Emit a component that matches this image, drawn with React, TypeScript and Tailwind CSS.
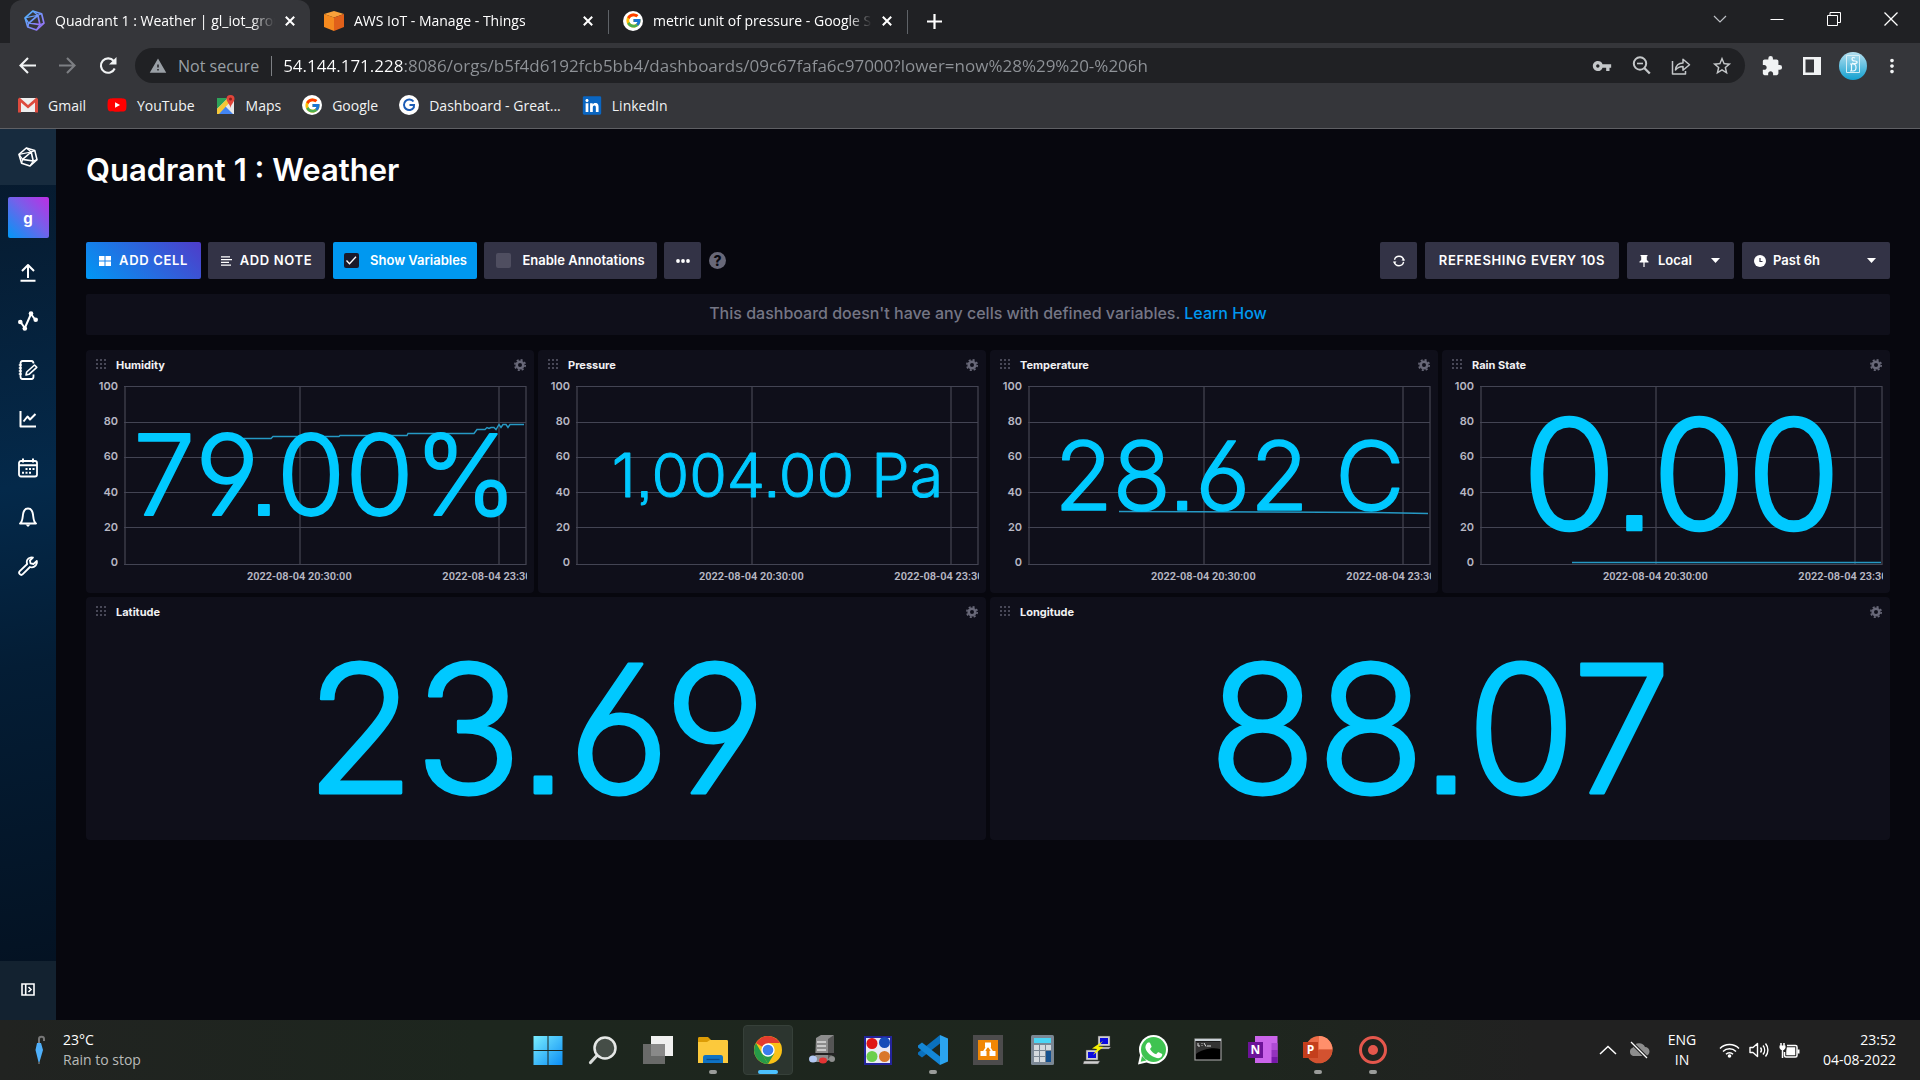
import type { ReactNode } from "react";
import { FcGoogle } from "react-icons/fc";
import { FaLinkedin, FaYoutube } from "react-icons/fa";
import {
  MdExtension,
  MdMoreVert,
  MdStarBorder,
  MdVpnKey,
  MdWarning,
} from "react-icons/md";

function Cubo({ size, color = "currentColor" }: { size: number; color?: string }) {
  return (
    <svg width={size} height={size} viewBox="0 0 20 20" fill="none" stroke={color} strokeWidth="1.6" strokeLinejoin="round">
      <defs>
        <linearGradient id="cubo" x1="0" y1="0" x2="1" y2="1">
          <stop offset="0" stopColor="#4bb8ff" />
          <stop offset="1" stopColor="#a06bf5" />
        </linearGradient>
      </defs>
      <path d="M8.3 1 16.8 3.6 19 12.6 12 19 3.6 16.2 1 7.4Z" />
      <path d="M13.2 5 4.6 12.4 15.2 14Z" />
      <path d="M8.3 1 13.2 5 16.8 3.6M1 7.4 13.2 5M4.6 12.4 3.6 16.2M4.6 12.4 1 7.4M15.2 14 12 19M15.2 14 19 12.6" strokeWidth="1.2" />
    </svg>
  );
}

function CloseX() {
  return (
    <svg width="10" height="10" viewBox="0 0 10 10" stroke="currentColor" strokeWidth="2">
      <path d="M.8.8 9.2 9.2M9.2.8.8 9.2" />
    </svg>
  );
}

function GoogleDisc() {
  return (
    <span className="flex size-5 shrink-0 items-center justify-center rounded-full bg-white">
      <FcGoogle size={17} />
    </span>
  );
}

function AwsCube() {
  return (
    <svg width="20" height="20" viewBox="0 0 20 20" className="shrink-0">
      <path d="M10 0 20 3 10 6.500 0 3Z" fill="#f9a13a" />
      <path d="M0 3 10 6.500V20L0 16Z" fill="#f58a1f" />
      <path d="M20 3 10 6.500V20l10-4Z" fill="#e0601a" />
    </svg>
  );
}

function Tab({ icon, title, active = false }: { icon: ReactNode; title: string; active?: boolean }) {
  return (
    <div
      className={
        active
          ? "flex h-full w-[300px] items-center gap-2.5 rounded-t-xl bg-[#35363a] pr-[15px] pb-0.5 pl-[14px]"
          : "flex h-full w-[298px] items-center gap-2.5 pr-[15px] pb-0.5 pl-[14px]"
      }
    >
      {icon}
      <span className="min-w-0 flex-1 overflow-hidden whitespace-nowrap [mask-image:linear-gradient(90deg,#000_calc(100%-24px),transparent)]">{title}</span>
      <button aria-label={"Close " + title} className="shrink-0">
        <CloseX />
      </button>
    </div>
  );
}

function BrowserChrome() {
  return (
    <header className="border-b border-[#5f6064] bg-[#35363a] font-['Open_Sans',sans-serif] text-[14px] text-white">
      <div className="flex h-[43px] items-center bg-[#202124] pl-[10px]">
        <Tab active icon={<Cubo size={21} color="url(#cubo)" />} title="Quadrant 1 : Weather | gl_iot_group" />
        <Tab icon={<AwsCube />} title="AWS IoT - Manage - Things" />
        <span className="h-6 w-px bg-[#5f6368]" />
        <Tab icon={<GoogleDisc />} title="metric unit of pressure - Google Search" />
        <span className="h-6 w-px bg-[#5f6368]" />
        <button aria-label="New tab" className="ml-[19px]">
          <svg width="15" height="15" viewBox="0 0 15 15" stroke="currentColor" strokeWidth="2.200">
            <path d="M7.500 0v15M0 7.500h15" />
          </svg>
        </button>
        <div className="mr-[22px] mb-1.5 ml-auto flex items-center gap-[43px]">
          <button aria-label="Search tabs">
            <svg width="14" height="14" viewBox="0 0 14 14" fill="none" stroke="#bdc1c6" strokeWidth="1.200">
              <path d="m1 4 6 6 6-6" />
            </svg>
          </button>
          <button aria-label="Minimize">
            <svg width="14" height="14" viewBox="0 0 14 14" stroke="currentColor"><path d="M.5 7.500h13" /></svg>
          </button>
          <button aria-label="Restore">
            <svg width="14" height="14" viewBox="0 0 14 14" fill="none" stroke="currentColor"><path d="M.5 3.500h10V13.500H.5ZM3 3.500V.5h10.500v10H11" /></svg>
          </button>
          <button aria-label="Close window">
            <svg width="14" height="14" viewBox="0 0 14 14" stroke="currentColor" strokeWidth="1.300"><path d="m.5.5 13 13M13.500.5l-13 13" /></svg>
          </button>
        </div>
      </div>

      <div className="flex h-[45px] items-center pl-[19px]">
        <div className="flex w-[116px] items-center gap-[23px]">
          <button aria-label="Back">
            <svg width="17" height="17" viewBox="0 0 17 17" fill="none" stroke="#f1f3f4" strokeWidth="2.100"><path d="M17 8.500H1.500M9 1 1.500 8.500 9 16" /></svg>
          </button>
          <button aria-label="Forward">
            <svg width="17" height="17" viewBox="0 0 17 17" fill="none" stroke="#7d7f83" strokeWidth="2.100"><path d="M0 8.500h15.500M8 1l7.500 7.500L8 16" /></svg>
          </button>
          <button aria-label="Reload">
            <svg width="18" height="18" viewBox="0 0 18 18" fill="none" stroke="#f1f3f4" strokeWidth="2.100"><path d="M15.700 11.500a7.200 7.200 0 1 1-1-7.500L16 5.500" /><path d="M17.500 0v7.500H10Z" fill="#f1f3f4" stroke="none" /></svg>
          </button>
        </div>
        <div className="flex h-[35px] flex-1 items-center rounded-full bg-[#202124] pr-[12px] pl-[14px]">
          <MdWarning size={18} color="#9aa0a6" />
          <span className="ml-[11px] text-[16px] text-[#9aa0a6]">Not secure</span>
          <span className="mr-[11px] ml-[12px] h-5 w-px bg-[#7d8084]" />
          <input
            aria-label="Address"
            readOnly
            value="54.144.171.228:8086/orgs/b5f4d6192fcb5bb4/dashboards/09c67fafa6c97000?lower=now%28%29%20-%206h"
            className="min-w-0 flex-1 bg-[linear-gradient(90deg,#fff_121px,#8f9398_121px)] bg-clip-text text-[17px] text-transparent outline-none"
          />
          <div className="flex items-center gap-5 text-[#c4c7c9]">
            <button aria-label="Passwords"><MdVpnKey size={20} /></button>
            <button aria-label="Zoom">
              <svg width="19" height="19" viewBox="0 0 19 19" fill="none" stroke="currentColor" strokeWidth="2"><circle cx="8" cy="7.500" r="6.200" /><path d="m12.300 12 5.500 5.500" strokeWidth="2.400" /><path d="M5 7.500h6" strokeWidth="1.600" /></svg>
            </button>
            <button aria-label="Share">
              <svg width="20" height="20" viewBox="0 0 20 20" fill="none" stroke="currentColor" strokeWidth="1.500" strokeLinejoin="round">
                <path d="M1.500 5v13h13v-3M4.500 14c.5-5 3-7 7.500-7V3.200l6.500 5.500-6.500 5.500V10.500c-3.500 0-5.500 1-7.500 3.500Z" />
              </svg>
            </button>
            <button aria-label="Bookmark"><MdStarBorder size={22} /></button>
          </div>
        </div>
        <div className="flex items-center pr-[17px] pl-[16px] text-[#f1f3f4]">
          <button aria-label="Extensions"><MdExtension size={22} /></button>
          <button aria-label="Side panel" className="ml-5">
            <svg width="18" height="18" viewBox="0 0 18 18" fill="none" stroke="currentColor" strokeWidth="2.500"><path d="M1.250 1.250h15.500v15.500H1.250Z" /><path d="M11 1h6v16h-6Z" fill="currentColor" stroke="none" /></svg>
          </button>
          <button aria-label="Profile" className="ml-[18px]">
            <svg width="28" height="28" viewBox="0 0 28 28">
              <defs><linearGradient id="av" x1="0" y1="0" x2="0" y2="1"><stop offset="0" stopColor="#b5e0f0" /><stop offset="1" stopColor="#12a0d0" /></linearGradient></defs>
              <circle cx="14" cy="14" r="14" fill="url(#av)" />
              <path d="M7.500 3.500h13v17h-13Z" fill="none" stroke="#d5eef6" />
              <path d="M16 6c-4-2-4 3 0 3s2 4-3 2M11 12h3c4 0 4 7 0 7h-3m1.500-7v7" fill="none" stroke="#eefaff" strokeWidth="1.200" />
            </svg>
          </button>
          <button aria-label="Menu" className="ml-[14px]"><MdMoreVert size={22} /></button>
        </div>
      </div>

      <nav aria-label="Bookmarks" className="flex h-[40px] items-center gap-[21px] pb-1.5 pl-[18px] text-[#f1f3f4]">
        <Bookmark label="Gmail">
          <svg width="20" height="16" viewBox="0 0 20 16"><path d="M1 1h18v14H1Z" fill="#eee" /><path d="M0 2 1.500.5 10 8 18.500.5 20 2v13.500h-3V5.500l-7 6-7-6v10H0Z" fill="#dd4b3e" /></svg>
        </Bookmark>
        <Bookmark label="YouTube"><span className="relative flex"><span className="absolute inset-x-1.5 inset-y-1.5 bg-white" /><FaYoutube size={20} color="#f00" className="relative" /></span></Bookmark>
        <Bookmark label="Maps">
          <svg width="20" height="20" viewBox="0 0 20 20"><path d="M1 3h17v16H1Z" fill="#e8e8e8" /><path d="M1 3h11L1 14Z" fill="#2ea35a" /><path d="m1 19 8-8 8 8Z" fill="#4285f4" /><path d="M1 14 12 3l3 3L3 19H1Z" fill="#f6c737" /><path d="M14.500 0a4 4 0 0 1 4 4c0 3-3.500 5-4 9-.5-4-4-6-4-9a4 4 0 0 1 4-4Z" fill="#e2453a" /><circle cx="14.500" cy="4" r="1.500" fill="#8a1f17" /></svg>
        </Bookmark>
        <Bookmark label="Google"><GoogleDisc /></Bookmark>
        <Bookmark label="Dashboard - Great...">
          <svg width="20" height="20" viewBox="0 0 20 20"><circle cx="10" cy="10" r="10" fill="#fff" /><path d="M14.500 6.500a5.300 5.300 0 1 0 .3 6l.2-2.500h-4.500" fill="none" stroke="#1a5bb5" strokeWidth="2" /></svg>
        </Bookmark>
        <Bookmark label="LinkedIn"><FaLinkedin size={21} color="#0a66c2" className="bg-[linear-gradient(#fff,#fff)] bg-[length:14px_14px] bg-center bg-no-repeat" /></Bookmark>
      </nav>
    </header>
  );
}

function Bookmark({ label, children }: { label: string; children: ReactNode }) {
  return (
    <a href="#" className="flex items-center gap-2.5 whitespace-nowrap">
      <span className="flex w-5 justify-center">{children}</span>
      {label}
    </a>
  );
}

const navItems: { label: string; icon: ReactNode }[] = [
  { label: "Load Data", icon: <path d="M10 16V3.500M4 9l6-6 6 6M2.500 18.800h15" strokeWidth="2" /> },
  {
    label: "Data Explorer",
    icon: (
      <>
        <path d="m2.500 11 4.300 6L13 3l4.500 6" strokeWidth="2" />
        <g fill="currentColor" stroke="none"><circle cx="2.300" cy="11" r="2.300" /><circle cx="6.800" cy="17.500" r="2.300" /><circle cx="13" cy="2.600" r="2.300" /><circle cx="17.700" cy="8.800" r="2.300" /></g>
      </>
    ),
  },
  {
    label: "Notebooks",
    icon: (
      <>
        <path d="M15.500 3.500c0-1.500-.5-2.500-2-2.500H4.500C3 1 2.500 2 2.500 3.500v13C2.500 18 3 19 4.500 19h9c1.500 0 2-1 2-2.500v-2" strokeWidth="1.800" />
        <path d="m16.500 5 2.300 2.300-7.800 7-3 .7.700-3Z" strokeWidth="1.600" />
        <path d="M.8 5h3M.8 8h3M.8 11h3M.8 14h3" strokeWidth="1.400" />
      </>
    ),
  },
  { label: "Dashboards", icon: <path d="M2.500 2v15.500H18M5.500 12.500l4-5 2.500 3 5.500-5.500" strokeWidth="2" /> },
  {
    label: "Tasks",
    icon: (
      <>
        <rect x="1" y="3" width="18" height="15.500" rx="2" strokeWidth="1.800" />
        <path d="M1 7.300h18M5 .5v4M15 .5v4" strokeWidth="2" />
        <path d="M7.500 11h9M4 14.800h9" strokeWidth="2" strokeDasharray="2 1.500" />
      </>
    ),
  },
  {
    label: "Alerts",
    icon: (
      <>
        <path d="M2 16.500c2.500-1.500 2.500-5 3-9C5.500 4 7 1.500 10 1.500S14.500 4 15 7.500c.5 4 .5 7.500 3 9Z" strokeWidth="1.900" />
        <path d="M7.500 17.500h5L10 20Z" fill="currentColor" stroke="none" />
      </>
    ),
  },
  {
    label: "Settings",
    icon: <path d="M12.500 1.500c-3 .8-4.500 3.500-3.300 6.500L1.800 15.200a2 2 0 0 0 3 3L12 11c3 1 6-.7 6.800-3.700.2-.8.1-1.600 0-2.300l-3.300 3-3-.7-.6-2.800 3-3c-.8-.2-1.600-.2-2.400 0Z" strokeWidth="1.800" />,
  },
];

function Sidebar() {
  return (
    <aside className="flex w-14 shrink-0 flex-col items-center bg-[linear-gradient(170deg,#07182a_0%,#04294a_40%,#041d35_60%,#04101f_100%)] text-white">
      <a href="#" aria-label="Home" className="flex h-14 w-full items-center justify-center bg-[#172b3e]">
        <Cubo size={20} />
      </a>
      <button className="mt-3 flex size-[41px] items-center justify-center rounded-xs bg-[linear-gradient(45deg,#0098f5,#7660ea_55%,#be2ee4)] pt-1 font-['Inter'] text-[15px] font-bold">g</button>
      <nav className="mt-[9px] flex flex-col">
        {navItems.map((n) => (
          <a key={n.label} href="#" aria-label={n.label} className="flex h-[49px] w-14 items-center justify-center">
            <svg width="20" height="20" viewBox="0 0 20 20" fill="none" stroke="currentColor" strokeLinejoin="round" strokeLinecap="butt">{n.icon}</svg>
          </a>
        ))}
      </nav>
      <button aria-label="Expand menu" className="mt-auto flex h-[59px] w-full items-center justify-center bg-[#132230] pb-0.5">
        <svg width="14" height="13" viewBox="0 0 14 13" fill="none" stroke="currentColor" strokeWidth="1.600"><path d="M1 1h12v11H1ZM4.700 1v11M7.500 4l2.500 2.500L7.500 9" /></svg>
      </button>
    </aside>
  );
}

function StatText({ children, size }: { children: string; size: string }) {
  return (
    <svg className="h-full w-full overflow-visible" role="img" aria-label={children}>
      <text
        x="50%"
        y="50%"
        dy="0.358em"
        textAnchor="middle"
        fill="#00c9ff"
        stroke="#00c9ff"
        strokeLinejoin="round"
        className={"font-['Inter',sans-serif] font-light [font-feature-settings:'cv03','cv04','ss07'] [stroke-width:0.016em] " + size}
      >
        {children}
      </text>
    </svg>
  );
}

function Cell({ title, wide = false, children }: { title: string; wide?: boolean; children: ReactNode }) {
  return (
    <section className={"flex h-[243px] flex-col rounded-sm bg-[#0f0f1a] " + (wide ? "col-span-2" : "")}>
      <div className="flex h-[29px] shrink-0 items-center pr-2 pl-[10px]">
        <svg width="10" height="11" viewBox="0 0 10 11" fill="none" stroke="#5c5c6c" strokeWidth="1.500" strokeDasharray="2 2"><path d="M0 1h10M0 5h10M0 9h10" /></svg>
        <h2 className="ml-[10px] flex-1 text-[11px] leading-4 font-bold text-[#f1f1f3]">{title}</h2>
        <button aria-label={"Configure " + title}>
          <svg width="12" height="12" viewBox="0 0 12 12" fill="none" stroke="#686878"><circle cx="6" cy="6" r="3.300" strokeWidth="2.600" /><circle cx="6" cy="6" r="5.200" strokeWidth="1.600" strokeDasharray="2.100 1.984" /></svg>
        </button>
      </div>
      {children}
    </section>
  );
}

function ChartCell({ title, line, stat, size }: { title: string; line?: string; stat: string; size: string }) {
  return (
    <Cell title={title}>
      <div className="flex pr-[7px] text-[11px] leading-[14px] font-semibold text-[#b8b8c4]">
        <div className="flex h-[190px] w-8 shrink-0 flex-col justify-between text-right">
          {[100, 80, 60, 40, 20, 0].map((v) => (
            <span key={v}>{v}</span>
          ))}
        </div>
        <div className="mt-[7px] ml-[6px] min-w-0 flex-1 overflow-hidden">
          <div className="relative h-[179px]">
            <svg className="h-full w-full" viewBox="0 0 403 179" preserveAspectRatio="none" fill="none">
              <g stroke="#2f2f3b" strokeWidth="2"><path d="M1 0v179M176 0v179M375 0v179M402 0v179" /></g>
              <g stroke="#434453"><path d="M0 .5h402M0 36.500h402M0 71.500h402M0 106.500h402M0 141.500h402M0 178.500h402" /></g>
              {line && <path d={line} stroke="#2699c4" strokeWidth="1.400" />}
            </svg>
            <div className="absolute inset-0">
              <StatText size={size}>{stat}</StatText>
            </div>
          </div>
          <div className="mt-[5px] flex overflow-hidden font-['Roboto',sans-serif] whitespace-nowrap">
            <span className="w-[79%] shrink-0 pl-[8%] text-center">2022-08-04 20:30:00</span>
            <span>2022-08-04 23:30:00</span>
          </div>
        </div>
      </div>
    </Cell>
  );
}

function Dashboard() {
  const btn = "flex h-[37px] items-center justify-center rounded-xs bg-[#333346] font-semibold whitespace-nowrap";
  return (
    <main className="min-w-0 flex-1 bg-[#07070e] pr-[30px] pl-[30px] font-['Inter',sans-serif] text-[13px] text-white">
      <h1 className="pt-[21px] text-[31px] leading-10 font-semibold">Quadrant 1 : Weather</h1>
      <div className="mt-[52px] flex items-center justify-between">
        <div className="flex items-center gap-[7px]">
          <button className="flex h-[37px] w-[115px] items-center justify-center gap-2 rounded-xs bg-[linear-gradient(45deg,#0098f5,#4f3cc9)] font-semibold tracking-wider whitespace-nowrap">
            <svg width="12" height="10" viewBox="0 0 12 10" fill="currentColor"><path d="M0 0h5.500v4.500H0ZM6.500 0H12v4.500H6.500ZM0 5.500h5.500V10H0ZM6.500 5.500H12V10H6.500Z" /></svg>
            ADD CELL
          </button>
          <button className={btn + " w-[117px] gap-2 tracking-wider"}>
            <svg width="11" height="10" viewBox="0 0 11 10" stroke="currentColor" strokeWidth="1.300"><path d="M0 .8h9M0 3.600h11M0 6.400h8M0 9.200h10" /></svg>
            ADD NOTE
          </button>
          <label className="ml-px flex h-[37px] w-[144px] items-center gap-[11px] rounded-xs bg-[#0098f0] pl-[11px] font-semibold whitespace-nowrap">
            <span className="relative flex">
              <input type="checkbox" defaultChecked className="size-[15px] appearance-none rounded-xs bg-[#1a1a2a]" />
              <svg className="pointer-events-none absolute inset-0" width="15" height="15" viewBox="0 0 15 15" fill="none" stroke="#fff" strokeWidth="1.300"><path d="m2.500 7.500 3 3.300 6.500-7" /></svg>
            </span>
            Show Variables
          </label>
          <label className={btn + " w-[173px] gap-[11px]"}>
            <input type="checkbox" className="size-[15px] appearance-none rounded-xs bg-[#4f4e60]" />
            Enable Annotations
          </label>
          <button aria-label="More options" className={btn + " w-[37px]"}>
            <svg width="14" height="4" viewBox="0 0 14 4" fill="currentColor"><circle cx="2" cy="2" r="1.900" /><circle cx="7" cy="2" r="1.900" /><circle cx="12" cy="2" r="1.900" /></svg>
          </button>
          <button aria-label="Help" className="ml-px flex size-[17px] items-center justify-center rounded-full bg-[#686878] text-[14px] leading-none font-extrabold text-[#07070e]">?</button>
        </div>
        <div className="flex items-center gap-2">
          <button aria-label="Refresh" className={btn + " w-[37px]"}>
            <svg width="12" height="12" viewBox="0 0 12 12" fill="none" stroke="currentColor" strokeWidth="1.400"><circle cx="6" cy="6" r="4.700" strokeDasharray="12.500 2.260" strokeDashoffset="-1" /><path d="M0 6.500h3.500L1.300 9ZM8.500 5.500H12L10.700 3Z" fill="currentColor" stroke="none" /></svg>
          </button>
          <button className={btn + " w-[194px] tracking-wider"}>REFRESHING EVERY 10S</button>
          <Dropdown label="Time zone" value="Local" width="w-[107px]">
            <svg width="10" height="12" viewBox="0 0 10 12" fill="currentColor"><path d="M1.500 0h7v1.200H7.800V5L9.500 6.500v1H5.600V12H4.400V7.500H.5v-1L2.200 5V1.200h-.7Z" /></svg>
          </Dropdown>
          <Dropdown label="Time range" value="Past 6h" width="w-[148px]">
            <svg width="12" height="12" viewBox="0 0 12 12"><circle cx="6" cy="6" r="6" fill="currentColor" /><path d="M6 3v3.500h2.500" fill="none" stroke="#333346" strokeWidth="1.200" /></svg>
          </Dropdown>
        </div>
      </div>

      <p className="mt-[15px] flex h-[41px] items-center justify-center gap-1 rounded-xs bg-[#0f0f1a] pb-[3px] text-[16px] font-medium text-[#757685]">
        This dashboard doesn't have any cells with defined variables.
        <a href="#" className="text-[#0098f0]">Learn How</a>
      </p>

      <div className="mt-[15px] grid grid-cols-4 gap-1">
        <ChartCell
          title="Humidity"
          stat="79.00%"
          size="text-[111px]"
          line="M93 52.500H147L149 50.500H215L216 49.500H283L284 47.500H350L353 43.500H361L363 41.500 365 42.500 367 41.500H370L372 43.500 375 38.500 377 41.500 379 38.500H382L384 41.500 386 38.500H400"
        />
        <ChartCell title="Pressure" stat="1,004.00 Pa" size="text-[61px]" />
        <ChartCell title="Temperature" stat="28.62 C" size="text-[95px]" line="M91 125.500 240 126 347 126.500 400 127.500" />
        <ChartCell title="Rain State" stat="0.00" size="text-[153px]" line="M92 176.500H401" />
        <Cell title="Latitude" wide>
          <div className="h-[208px]"><StatText size="text-[177px]">23.69</StatText></div>
        </Cell>
        <Cell title="Longitude" wide>
          <div className="h-[208px]"><StatText size="text-[177px]">88.07</StatText></div>
        </Cell>
      </div>
    </main>
  );
}

function Dropdown({ label, value, width, children }: { label: string; value: string; width: string; children: ReactNode }) {
  return (
    <div className={"relative flex h-[37px] items-center rounded-xs bg-[#333346] " + width}>
      <span className="pointer-events-none absolute left-3">{children}</span>
      <select aria-label={label} className="h-full w-full appearance-none pl-[31px] font-semibold outline-none">
        <option>{value}</option>
      </select>
      <svg className="pointer-events-none absolute right-[14px]" width="9" height="5" viewBox="0 0 9 5" fill="currentColor"><path d="M0 0h9L4.500 5Z" /></svg>
    </div>
  );
}

const apps: { name: string; state?: "open" | "active"; icon: ReactNode }[] = [
  {
    name: "Start",
    icon: (
      <>
        <defs><linearGradient id="win" gradientUnits="userSpaceOnUse" x1="0" y1="0" x2="30" y2="30"><stop offset="0" stopColor="#7cf0ff" /><stop offset="1" stopColor="#0a8cf5" /></linearGradient></defs>
        <path d="M.5 1H14.500V15H.5ZM15.500 1h14v14h-14ZM.5 16H14.500V30H.5ZM15.500 16h14v14h-14Z" fill="url(#win)" />
      </>
    ),
  },
  {
    name: "Search",
    icon: (<><path d="m8.500 21-6 6.500" stroke="#d8dbd9" strokeWidth="3.200" strokeLinecap="round" /><circle cx="17" cy="13" r="10.500" fill="#454d47" stroke="#e6e8e7" strokeWidth="2.500" /></>),
  },
  { name: "Task View", icon: <><path d="M8 1h22v20H8Z" fill="#f0f0f0" /><path d="M0 9h22v20H0Z" fill="#777" fillOpacity=".85" /></> },
  {
    name: "File Explorer",
    state: "open",
    icon: (<><path d="M0 3.500C0 2.500.5 2 1.500 2H10l3 3v5H0Z" fill="#dc9c06" /><path d="M0 7h9l3-2h16.500c1 0 1.500.5 1.500 1.500V28H0Z" fill="#fcc93c" /><path d="M5 28v-5c0-2 .5-3 2.500-3h15c2 0 2.500 1 2.500 3v5Z" fill="#0f72c4" /><path d="M8.500 24.500h13" stroke="#0a4a8c" strokeWidth="1.300" /></>),
  },
  {
    name: "Chrome",
    state: "active",
    icon: (<><circle cx="15" cy="15" r="14" fill="#fbc116" /><path d="M15 15 2.900 8A14 14 0 0 1 27.100 8H15Z" fill="#e33b2e" /><path d="M2.900 8 9 18.500 15 29A14 14 0 0 1 2.900 8Z" fill="#269a48" /><path d="m15 29 6.200-10.500L15 15l-6 3.500Z" fill="#269a48" /><circle cx="15" cy="15" r="6.700" fill="#fff" /><circle cx="15" cy="15" r="5.300" fill="#3b7ded" /></>),
  },
  {
    name: "Server Tools",
    icon: (<><path d="m8 3 5-3h13l-3 4v20l-6 3H7Z" fill="#8c8c8c" /><path d="m20 4 6-4v19l-6 5Z" fill="#555" /><path d="M9 7h9M9 11h9M9 15h9" stroke="#ddd" strokeWidth="1.600" /><path d="M1 19h28" stroke="#222" strokeWidth="2" /><ellipse cx="5" cy="24" rx="4" ry="3.500" fill="#b3c8f2" /><ellipse cx="15" cy="25.500" rx="4" ry="3" fill="#e33434" /><ellipse cx="24" cy="24" rx="3" ry="3" fill="#8f8f8f" /></>),
  },
  {
    name: "Control Panel",
    icon: (<><rect x="2" y="2" width="26" height="27" fill="#e9e9f6" stroke="#24249c" strokeWidth="2" /><circle cx="9" cy="8.500" r="5.500" fill="#e01414" /><circle cx="21.500" cy="7.500" r="5.500" fill="#174cb8" /><circle cx="9" cy="21.500" r="5.500" fill="#6bcf4c" /><circle cx="21.500" cy="21.500" r="5.500" fill="#d9772b" /></>),
  },
  {
    name: "Visual Studio Code",
    state: "open",
    icon: (<><path d="M22 0 30 3.500V26.500L22 30Z" fill="#2ba4f0" /><path d="M22 0v8.500L4 22.500 0 19.500v-2Z" fill="#0a70bd" /><path d="M22 30v-8.500L4 7.500 0 10.500v2Z" fill="#1486d6" /></>),
  },
  {
    name: "Draw.io",
    icon: (<><path d="M0 0h30v30H0Z" fill="#4c4b4c" /><path d="M5 5h20v20H5Z" fill="#f08705" /><path d="m15 10-5 8M15 10l5 8" stroke="#fff" strokeWidth="1.800" /><path d="M12 7.500h6v5h-6ZM7.500 16h6v5h-6ZM16.500 16h6v5h-6Z" fill="#fff" /></>),
  },
  {
    name: "Calculator",
    icon: (<><rect x="3" width="23" height="30" rx="1.500" fill="#7b8794" /><path d="M6 3h17v5H6Z" fill="#4bd5f5" /><path d="M6 10h5v5H6ZM12 10h5v5h-5ZM18 10h5v5h-5ZM6 16h5v5H6ZM12 16h5v5h-5ZM6 22h5v5H6ZM12 22h5v5h-5Z" fill="#d5dadf" /><path d="M18 16h5v11h-5Z" fill="#14508f" /></>),
  },
  {
    name: "PuTTY",
    icon: (<><path d="M15 1h12v10H15ZM3 15h12v10H3ZM14 12h14l-2 2H14ZM1 26h16l-2 3H0Z" fill="#cfcfcf" stroke="#444" strokeWidth=".5" /><path d="M17 3h8v6h-8ZM5 17h8v6H5Z" fill="#0a0ae0" /><path d="M20 6 9 13.500l5 .5-4 6 10.500-8-5-.5Z" fill="#f5f000" /></>),
  },
  {
    name: "WhatsApp",
    icon: (<><circle cx="15.500" cy="14.500" r="14.500" fill="#fff" /><path d="M0 29.500 2.500 18l8 9Z" fill="#fff" /><circle cx="15.500" cy="14.500" r="12.500" fill="#3fc351" /><path d="M2.700 26.800 4 21l4.500 4.500Z" fill="#3fc351" /><path d="M11 7.500c.7 0 1 .2 1.300 1l1.200 2.800c.2.600 0 1-1.500 2.600 1.500 2.800 3.300 4.300 6.200 5.400 1.600-2 1.800-2.300 2.500-2l3 1.500c.6.300.6.600.5 1.200-.5 2.600-3.300 3.600-5.400 3.100C13 21.500 9.500 18 7.800 14.300 6.700 11.700 8 9.400 9.300 8c.4-.4 1.100-.5 1.700-.5Z" fill="#fff" /></>),
  },
  {
    name: "Command Prompt",
    icon: (<><rect x="2" y="4" width="26" height="21" fill="#000" stroke="#9a9a9a" strokeWidth="1.200" /><path d="M2 4h26v2H2Z" fill="#c9d0d5" /><path d="M3 6.500h24V14C18 12 8 15 3 19Z" fill="#333" /><path d="M5 8v3h2M9 8v.8M9 10.200v.8M11 8l2 3.500M14 11h4" stroke="#ddd" fill="none" /></>),
  },
  {
    name: "OneNote",
    icon: (<><path d="M7 1h22.500v27H7Z" fill="#ca64ea" /><path d="M23.500 8h6v7h-6Z" fill="#ae4bd5" /><path d="M23.500 15h6v7h-6Z" fill="#9332bf" /><path d="M23.500 22h6v6h-6Z" fill="#7719aa" /><path d="M0 7h15v16H0Z" fill="#6d1399" /><text x="7.500" y="19" textAnchor="middle" fontSize="12" fontWeight="700" fill="#fff" fontFamily="Open Sans">N</text></>),
  },
  {
    name: "PowerPoint",
    state: "open",
    icon: (<><circle cx="16" cy="14.500" r="13.500" fill="#ed6c47" /><path d="M16 1a13.500 13.500 0 0 1 13.500 13.500H16Z" fill="#ff8f6b" /><path d="M29.500 14.500A13.500 13.500 0 0 1 4 21l12-6.500Z" fill="#d35230" /><path d="M0 7h15v16H0Z" fill="#c43e1c" /><text x="7.500" y="19" textAnchor="middle" fontSize="12" fontWeight="700" fill="#fff" fontFamily="Open Sans">P</text></>),
  },
  { name: "Recorder", state: "open", icon: <><circle cx="15" cy="15" r="12.500" fill="none" stroke="#e4574c" strokeWidth="3" /><circle cx="15" cy="15" r="5" fill="#e4574c" /></> },
];

function Taskbar() {
  return (
    <footer className="grid h-[60px] grid-cols-[1fr_auto_1fr] items-center bg-[linear-gradient(90deg,#212321,#1d261e_25%,#1e261e_65%,#212121_80%)] font-['Open_Sans',sans-serif] text-[14px] leading-5 text-white">
      <button className="flex items-center gap-[18px] justify-self-start pl-[35px] text-left">
        <svg width="10" height="30" viewBox="0 0 10 30" fill="none"><path d="M4 8V4c0-3 5-3 5 0v2" stroke="#777" strokeWidth="2" /><path d="M2 8h4l2 7-3.500 12h-1L.500 15Z" fill="#4fb0fb" /><path d="M4 27v2" stroke="#999" /></svg>
        <span>
          23°C
          <br />
          <span className="text-[#b9bbb9]">Rain to stop</span>
        </span>
      </button>
      <div className="flex gap-[5px]">
        {apps.map((a) => (
          <button
            key={a.name}
            aria-label={a.name}
            className={
              a.state === "active"
                ? "relative flex size-[50px] items-center justify-center rounded border border-[#364039] bg-[#2c352f]"
                : "relative flex size-[50px] items-center justify-center"
            }
          >
            <svg width="30" height="30" viewBox="0 0 30 30" fill="none">{a.icon}</svg>
            {a.state && (
              <span
                className={
                  a.state === "active"
                    ? "absolute bottom-0 h-1 w-5 rounded-full bg-[#4cc2ff]"
                    : "absolute bottom-px h-1 w-2 rounded-full bg-[#9a9c9a]"
                }
              />
            )}
          </button>
        ))}
      </div>
      <div className="flex items-center justify-self-end pr-6">
        <button aria-label="Show hidden icons">
          <svg width="18" height="10" viewBox="0 0 18 10" fill="none" stroke="currentColor" strokeWidth="1.500"><path d="m1 9 8-7.500L17 9" /></svg>
        </button>
        <button aria-label="OneDrive" className="ml-[11px]">
          <svg width="22" height="18" viewBox="0 0 22 18"><path d="M5 15a4.500 4.500 0 0 1 0-8.500 6.500 6.500 0 0 1 12-.5 4.500 4.500 0 0 1 0 9Z" fill="#8d8d8d" /><path d="m3 1 16 16" stroke="#222" strokeWidth="3.500" /><path d="m3 1 16 16" stroke="#fff" strokeWidth="1.300" /></svg>
        </button>
        <button className="ml-[14px] w-9 text-center">ENG<br />IN</button>
        <button aria-label="Network, volume and battery" className="ml-[19px] flex items-center gap-[9px]">
          <svg width="21" height="16" viewBox="0 0 21 16" fill="none" stroke="currentColor" strokeWidth="1.500"><path d="M1 6.500a13.500 13.500 0 0 1 19 0M4 9.500a9.200 9.200 0 0 1 13 0M7 12.300a5 5 0 0 1 7 0" /><circle cx="10.500" cy="14" r="1.800" fill="currentColor" stroke="none" /></svg>
          <svg width="21" height="16" viewBox="0 0 21 16" fill="none" stroke="currentColor" strokeWidth="1.400" strokeLinejoin="round"><path d="M1 5.500h3L8.500 1.500v13L4 10.500H1ZM11.500 5.500a4 4 0 0 1 0 5M14 3.500a7 7 0 0 1 0 9M16.500 1.500a10 10 0 0 1 0 13" /></svg>
          <svg width="21" height="17" viewBox="0 0 21 17" fill="none" stroke="currentColor" strokeWidth="1.500"><path d="M8 3.500h8.500c1 0 1.500.5 1.500 1.500v8.500c0 1-.5 1.500-1.500 1.500H7c-1 0-1.500-.5-1.500-1.500V10" /><path d="M8.500 6h7v6.500H8V9Z" fill="currentColor" /><path d="M18.500 7.500h2v4h-2ZM.5 3.500h6v2.500l-1.500 2H2L.5 6Z" fill="currentColor" stroke="none" /><path d="M2 1v3M5 1v3M3.500 8v8" /></svg>
        </button>
        <button className="ml-[16px] w-20 text-right whitespace-nowrap">23:52<br />04-08-2022</button>
      </div>
    </footer>
  );
}

export default function App() {
  return (
    <div className="flex min-h-screen flex-col bg-[#07070e]">
      <BrowserChrome />
      <div className="flex flex-1">
        <Sidebar />
        <Dashboard />
      </div>
      <Taskbar />
    </div>
  );
}
